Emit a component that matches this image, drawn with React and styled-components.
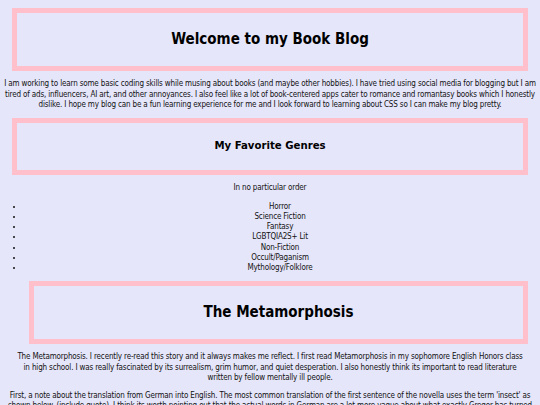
import React from 'react';
import styled, { createGlobalStyle } from 'styled-components';

const GlobalStyle = createGlobalStyle`
  html, body {
    background: #e6e6fa;
  }
  body {
    margin: 4px;
    font-family: "DejaVu Sans Condensed", "DejaVu Sans", Verdana, sans-serif;
    font-size: 8px;
    letter-spacing: -0.16px;
    line-height: 10.2px;
    color: #111;
    text-align: center;
  }
`;

const HeaderBox = styled.header`
  border: 5px solid #ffc0cb;
  padding: 6.5px;
  margin: 4px 8px 4px ${props => props.indent || 8}px;
`;

const Title = styled.h1`
  font-size: 15px;
  line-height: 19px;
  letter-spacing: 0;
  font-weight: bold;
  color: #000;
  margin: 10.7px 0;
`;

const SubTitle = styled.h2`
  font-size: 11.3px;
  line-height: 14.5px;
  letter-spacing: 0;
  font-weight: bold;
  color: #000;
  margin: 10px 0;
`;

const Paragraph = styled.p`
  margin: 8px ${props => props.inset || 0}px;
`;

const GenreList = styled.ul`
  margin: 8px 0;
  padding-left: 20px;
  list-style: disc;
`;

const Genre = styled.li`
  text-align: center;
`;

const genres = [
  'Horror',
  'Science Fiction',
  'Fantasy',
  'LGBTQIA2S+ Lit',
  'Non-Fiction',
  'Occult/Paganism',
  'Mythology/Folklore',
];

const App = () => {
  return (
    <>
      <GlobalStyle />
      <HeaderBox>
        <Title>Welcome to my Book Blog</Title>
      </HeaderBox>
      <Paragraph>
        I am working to learn some basic coding skills while musing about books (and maybe other hobbies). I have tried using social media for blogging but I am tired of ads, influencers, AI art, and other annoyances. I also feel like a lot of book-centered apps cater to romance and romantasy books which I honestly dislike. I hope my blog can be a fun learning experience for me and I look forward to learning about CSS so I can make my blog pretty.
      </Paragraph>

      <HeaderBox>
        <SubTitle>My Favorite Genres</SubTitle>
      </HeaderBox>
      <Paragraph>In no particular order</Paragraph>
      <GenreList>
        {genres.map(g => (
          <Genre key={g}>{g}</Genre>
        ))}
      </GenreList>

      <HeaderBox indent={25}>
        <Title>The Metamorphosis</Title>
      </HeaderBox>
      <Paragraph inset={10}>
        The Metamorphosis. I recently re-read this story and it always makes me reflect. I first read Metamorphosis in my sophomore English Honors class in high school. I was really fascinated by its surrealism, grim humor, and quiet desperation. I also honestly think its important to read literature written by fellow mentally ill people.
      </Paragraph>
      <Paragraph>
        First, a note about the translation from German into English. The most common translation of the first sentence of the novella uses the term 'insect' as shown below. (include quote). I think its worth pointing out that the actual words in German are a lot more vague about what exactly Gregor has turned into.
      </Paragraph>
    </>
  );
};

export default App;
